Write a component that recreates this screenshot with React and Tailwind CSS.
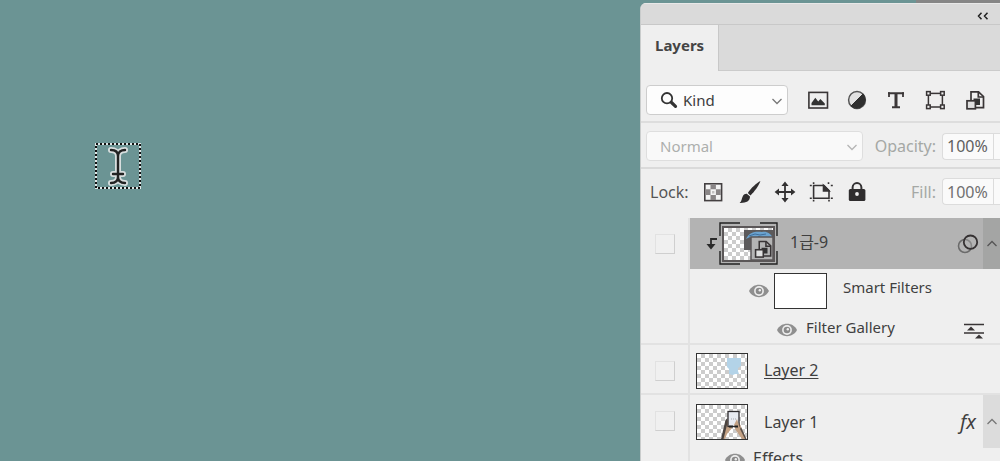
import { useState } from 'react'

const CHECKER = 'bg-[repeating-conic-gradient(#cccccc_0_25%,#ffffff_0_50%)] bg-size-[8px_8px]'

function Chevron({ className = '', up = false }) {
  return (
    <svg viewBox="0 0 12 8" className={`w-3 h-2 ${className}`} fill="none" stroke="currentColor" strokeWidth="1.3" aria-hidden="true">
      <path d={up ? 'M1.5 6 L6 1.5 L10.5 6' : 'M1.5 2 L6 6.5 L10.5 2'} />
    </svg>
  )
}

function SearchIcon({ className = '' }) {
  return (
    <svg viewBox="0 0 18 18" className={`w-[18px] h-[18px] ${className}`} fill="none" stroke="#333333" aria-hidden="true">
      <circle cx="7" cy="7.2" r="5.2" strokeWidth="1.8" />
      <path d="M11.5 11.5 L15.5 15.3" strokeWidth="3.2" strokeLinecap="round" />
    </svg>
  )
}

function Eye() {
  return (
    <svg viewBox="0 0 20 14" className="w-5 h-3.5" aria-hidden="true">
      <path d="M0 7 C4 -1.2 16 -1.2 20 7 C16 15.2 4 15.2 0 7Z" fill="#8f8f8f" />
      <circle cx="10" cy="7" r="4.9" fill="#ededed" />
      <circle cx="10" cy="7" r="3.3" fill="#8a8a8a" />
      <circle cx="10.8" cy="6.2" r="1.2" fill="#ededed" />
    </svg>
  )
}

// Filter row icons
function PixelIcon() {
  return (
    <svg viewBox="0 0 24 24" className="size-6">
      <rect x="2.9" y="4.4" width="18.6" height="15.6" fill="none" stroke="#393536" strokeWidth="1.6" />
      <path d="M5.5 17.2 V15 L9.3 9.8 L12.2 13.6 L14.4 11 L18.8 15.5 V17.2Z" fill="#333333" />
    </svg>
  )
}

function AdjustmentIcon() {
  return (
    <svg viewBox="0 0 24 24" className="size-6">
      <circle cx="12" cy="12" r="8.4" fill="#e2e2e2" stroke="#555555" strokeWidth="1.5" />
      <path d="M18 6 A8.5 8.5 0 0 1 6 18Z" fill="#2f2f2f" stroke="#2f2f2f" />
    </svg>
  )
}

function TypeIcon() {
  return (
    <svg viewBox="0 0 24 24" className="size-6" fill="none" stroke="#3b3738">
      <path d="M4 5.2 H20" strokeWidth="2" />
      <path d="M5 4.2 V9 M19 4.2 V9" strokeWidth="1.8" />
      <path d="M12 5 V19" strokeWidth="3" />
      <path d="M8 19.2 H16" strokeWidth="2" />
    </svg>
  )
}

function ShapeIcon() {
  return (
    <svg viewBox="0 0 24 24" className="size-6" fill="#efefef" stroke="#393536" strokeWidth="1.5">
      <rect x="5.4" y="5.4" width="14" height="13.6" fill="none" />
      <rect x="3.6" y="3.6" width="3.6" height="3.6" />
      <rect x="17.6" y="3.6" width="3.6" height="3.6" />
      <rect x="3.6" y="17" width="3.6" height="3.6" />
      <rect x="17.6" y="17" width="3.6" height="3.6" />
    </svg>
  )
}

function SmartObjectIcon({ className = 'size-6' }) {
  return (
    <svg viewBox="0 0 24 24" className={className} fill="none" stroke="#393536" strokeWidth="1.7">
      <path d="M9 12 V3.8 H16.5 L21.5 8.5 V19.6 H14" />
      <path d="M16.3 3.8 V9 H21.5" />
      <path d="M11.5 10.5 H18 V17 H14 V13 H11.5Z" fill="#333333" stroke="none" />
      <rect x="5" y="12.8" width="8.4" height="8" fill="#e0e0e0" />
    </svg>
  )
}

// Lock row icons
function TransparencyIcon() {
  return (
    <svg viewBox="0 0 24 24" className="size-6">
      <rect x="3.8" y="3.8" width="16.8" height="16.8" fill="#f4f4f4" stroke="#444041" strokeWidth="1.6" />
      <path
        d="M9.5 4.5h5.4v4.8h-5.4zM4.6 9.3h4.9v5.6h-4.9zM14.9 9.3h4.9v5.6h-4.9zM9.5 14.9h5.4v5h-5.4z"
        fill="#8a8687"
      />
      <path d="M11 11h2.4v2.4h-2.4z" fill="#c4c2c2" />
    </svg>
  )
}

function BrushIcon() {
  return (
    <svg viewBox="0 0 24 24" className="size-6" fill="#2f2d2e">
      <path d="M23.4 1 C20 2.5 13.5 8.5 10.8 13 L13.5 15.4 C17.5 11.5 22 5.5 23.4 1Z" />
      <path d="M9.8 13.8 L13 16.6 C13 21.5 9 23.2 2.6 23 C5 21 4.5 18.5 5.8 16.2 C6.8 14.4 8.4 13.6 9.8 13.8Z" />
    </svg>
  )
}

function MoveIcon() {
  return (
    <svg viewBox="0 0 24 24" className="size-6" fill="#333132">
      <path d="M11.1 4h1.8v16h-1.8zM4 11.1h16v1.8H4z" />
      <path d="M12 1.6 L15.6 6 H8.4ZM12 22.4 L8.4 18 H15.6ZM1.6 12 L6 8.4 V15.6ZM22.4 12 L18 15.6 V8.4Z" />
    </svg>
  )
}

function ArtboardIcon() {
  return (
    <svg viewBox="0 0 24 24" className="size-6" fill="none" stroke="#353233" strokeWidth="1.6">
      <path d="M4.6 5.5 H15 L20 10.5 V18.2 H4.6Z" />
      <path d="M14.5 5.5 V11 H20Z" fill="#353233" />
      <path d="M0.8 5.5 H2.8 M4.6 2.2 V4 M0.8 18.2 H2.8 M4.6 19.8 V21.6 M20 19.8 V21.6 M21.8 18.2 H23.8 M21.8 5.5 H23.8 M19.5 2.2 V4" />
    </svg>
  )
}

function LockIcon() {
  return (
    <svg viewBox="0 0 24 24" className="size-6">
      <path d="M7.6 10 V7.5 A4.4 4.4 0 0 1 16.4 7.5 V10" fill="none" stroke="#333132" strokeWidth="2" />
      <rect x="3.8" y="9" width="16.6" height="12" rx="1.5" fill="#2f2d2e" />
      <circle cx="12" cy="14" r="1.9" fill="#efefef" />
    </svg>
  )
}

const filters = [
  { label: 'Pixel layers', Icon: PixelIcon },
  { label: 'Adjustment layers', Icon: AdjustmentIcon },
  { label: 'Type layers', Icon: TypeIcon },
  { label: 'Shape layers', Icon: ShapeIcon },
  { label: 'Smart objects', Icon: SmartObjectIcon },
]

const locks = [
  { label: 'Lock transparent pixels', Icon: TransparencyIcon },
  { label: 'Lock image pixels', Icon: BrushIcon },
  { label: 'Lock position', Icon: MoveIcon },
  { label: 'Prevent auto-nesting', Icon: ArtboardIcon },
  { label: 'Lock all', Icon: LockIcon },
]

function VisibilityCell({ name }) {
  return (
    <div className="w-[49px] shrink-0 border-r-2 border-[#e2e2e2] pt-4 pl-3.5">
      <input
        type="checkbox"
        aria-label={`Show ${name}`}
        className="block size-5 appearance-none border border-[#e2e2e2] border-r-[#cfcfcf] border-b-[#cfcfcf] bg-[#f0f0f0]"
      />
    </div>
  )
}

function ValueField({ id, label, value, onChange, inputClass }) {
  return (
    <div className="ml-auto flex items-center text-base">
      <label htmlFor={id} className="mr-1.5 text-[#a5a8a5]">{label}</label>
      <div className="flex h-[27px] rounded-l border border-r-0 border-[#dcdcdc] bg-[#fafafa]">
        <input id={id} className={`w-[51px] border-r border-[#dcdcdc] pl-1 outline-none ${inputClass}`} value={value} onChange={e => onChange(e.target.value)} />
        <span className="w-1.5" />
      </div>
    </div>
  )
}

function SmartThumb() {
  return (
    <div className="relative h-[43px] w-[59px]">
      <svg viewBox="0 0 59 43" className="absolute inset-0" fill="none" stroke="#222222" strokeWidth="1.4">
        <path d="M21 1 H1 V14 M1 29 V42 H21 M41 1 H58 V14 M58 29 V42 H41" />
      </svg>
      <div className={`absolute top-1 left-[3px] h-[36px] w-[53px] border-2 border-[#5b5758] ${CHECKER}`}>
        <svg viewBox="0 0 49 32" className="h-8 w-[49px]">
          <rect x="20" y="2" width="29" height="20" fill="#5c5a5b" />
          <path d="M22 11 C25 4 32 3 38 4 C43 3 47 6 49 10 L44 9 L40 11 L35 8 L30 11 L26 9Z" fill="#6ba3cf" />
          <path d="M25 8 L31 6 L36 7 L42 6" stroke="#3f6f9c" fill="none" />
          <rect x="27" y="9" width="22" height="23" fill="#b4b4b4" stroke="#5b5758" strokeWidth="1.5" />
        </svg>
        <SmartObjectIcon className="absolute right-0 bottom-0 size-[22px]" />
      </div>
    </div>
  )
}

function LayerTwoThumb() {
  return (
    <div className={`h-[36px] w-[52px] border border-[#333333] ${CHECKER}`}>
      <svg viewBox="0 0 50 34" className="h-[34px] w-[50px]">
        <path d="M30 4 H44 V12 L41 14 V17 L42 20 L38 20 L36 21 L32 20 V15 L30 13Z" fill="#b3d3e8" />
      </svg>
    </div>
  )
}

function LayerOneThumb() {
  return (
    <div className={`h-[36px] w-[52px] border border-[#333333] ${CHECKER}`}>
      <svg viewBox="0 0 50 34" className="h-[34px] w-[50px]">
        <path d="M25 34 L28 22 L31 14 L35 23 L30 29 L28 34Z" fill="#c3a184" />
        <path d="M24 34 L28.5 15 L30.5 13 L30 20 L26.5 34Z" fill="#4a4340" />
        <path d="M39 19 L41 14 L44 22 L49 34 H45 L38 24Z" fill="#c3a184" />
        <path d="M44 22 L49.5 34 H48 L43 24Z" fill="#5b504a" />
        <rect x="31" y="6.5" width="11" height="15" fill="#e8ebf2" stroke="#2e2c2f" strokeWidth="1.3" />
        <path d="M37 20 L40 14 L42.5 22 L40 24Z" fill="#c3a184" />
        <path d="M32 21.5 H36 M37.5 21.5 H41" stroke="#222222" strokeWidth="2" />
        <path d="M34 14 H39" stroke="#a5a9b0" strokeDasharray="1 1" />
      </svg>
    </div>
  )
}

function LayersPanel() {
  const [kind, setKind] = useState('Kind')
  const [mode, setMode] = useState('Normal')
  const [opacity, setOpacity] = useState('100%')
  const [fill, setFill] = useState('100%')

  return (
    <section className="flex min-h-0 flex-1 flex-col overflow-hidden rounded-tl-md border-l border-[#c9cccc] bg-[#efefef]">
      <div className="flex h-[22px] shrink-0 items-center justify-end border-t border-b border-[#c8c8c8] border-t-[#e8e8e8] bg-[#dadada] pt-1 pr-2.5">
        <button aria-label="Collapse panel">
          <svg viewBox="0 0 14 8" className="h-2 w-3.5" fill="none" stroke="#222222" strokeWidth="1.5">
            <path d="M5.5 0.8 L2.5 4 L5.5 7.2 M11.5 0.8 L8.5 4 L11.5 7.2" />
          </svg>
        </button>
      </div>
      <div className="flex h-[46px] shrink-0 bg-[#dadada]">
        <button className="border-r border-[#c8c8c8] bg-[#efefef] px-3.5 pb-1.5 text-[15px] font-bold text-[#444444]">Layers</button>
        <div className="flex-1 border-b border-[#cbcbcb]" />
      </div>

      <div className="flex h-[52px] shrink-0 items-center border-b-2 border-[#dddddd] pt-2 pl-[5px]">
        <div className="relative">
          <SearchIcon className="absolute top-1.5 left-3.5" />
          <select
            aria-label="Filter type"
            className="h-[30px] w-[142px] appearance-none rounded border border-[#cdcdcd] bg-[#fdfdfd] pl-9 text-[#3c3c3c]"
            value={kind}
            onChange={e => setKind(e.target.value)}
          >
            <option>Kind</option>
            <option>Name</option>
            <option>Effect</option>
          </select>
          <Chevron className="pointer-events-none absolute top-3 right-[5px] text-[#777777]" />
        </div>
        <div className="ml-[18px] flex gap-[15px]">
          {filters.map(({ label, Icon }) => (
            <button key={label} aria-label={label}><Icon /></button>
          ))}
        </div>
      </div>

      <div className="flex h-[46px] shrink-0 items-center border-b-2 border-[#dadada] pt-0.5 pl-[5px]">
        <div className="relative">
          <select
            aria-label="Blend mode"
            className="h-[30px] w-[217px] appearance-none rounded border border-[#dedede] bg-[#f9f9f9] pl-[13px] text-[#adafad]"
            value={mode}
            onChange={e => setMode(e.target.value)}
          >
            <option>Normal</option>
            <option>Multiply</option>
            <option>Screen</option>
          </select>
          <Chevron className="pointer-events-none absolute top-3 right-[5px] text-[#b5b5b5]" />
        </div>
        <ValueField id="opacity" label="Opacity:" value={opacity} onChange={setOpacity} inputClass="text-[#606060]" />
      </div>

      <div className="flex h-[49px] shrink-0 items-center pb-1 pl-[9px]">
        <span className="w-[51px] text-base text-[#555555]">Lock:</span>
        <div className="flex gap-3">
          {locks.map(({ label, Icon }) => (
            <button key={label} aria-label={label}><Icon /></button>
          ))}
        </div>
        <ValueField id="fill" label="Fill:" value={fill} onChange={setFill} inputClass="text-[#707070]" />
      </div>

      <ul className="min-h-0 flex-1 overflow-hidden text-[#3f3f3f]">
        <li className="flex border-b-2 border-[#e2e2e2]">
          <VisibilityCell name="1급-9" />
          <div className="flex-1">
            <div className="flex h-[51px] items-center bg-[#b3b3b3]">
              <svg viewBox="0 0 12 14" className="ml-4 h-3.5 w-3" fill="none" stroke="#2a2a2a" strokeWidth="1.8" aria-hidden="true">
                <path d="M11 2 H5 V8" />
                <path d="M0.5 7 H9.5 L5 12.5Z" fill="#2a2a2a" stroke="none" />
              </svg>
              <div className="ml-px"><SmartThumb /></div>
              <span className="ml-3 pb-1 text-base leading-5">1급-9</span>
              <svg viewBox="0 0 22 20" className="mr-1 ml-auto h-5 w-[22px]" fill="none" aria-hidden="true">
                <circle cx="8" cy="12" r="6.5" stroke="#6b6b6b" strokeWidth="1.6" />
                <circle cx="13.5" cy="8.2" r="6.7" fill="#b3b3b3" fillOpacity="0.4" stroke="#353132" strokeWidth="1.8" />
              </svg>
              <button aria-label="Collapse smart filters" className="flex h-full w-[17px] items-center justify-center bg-[#a4a5a4] text-[#555555]"><Chevron up /></button>
            </div>
            <div className="flex h-[44px] items-center pl-[59px]">
              <button aria-label="Toggle smart filters"><Eye /></button>
              <div className="ml-[5px] h-[36px] w-[53px] border border-[#333333] bg-white" />
              <span className="ml-4 pb-2">Smart Filters</span>
            </div>
            <div className="flex h-[30px] items-center pl-[87px]">
              <button aria-label="Toggle Filter Gallery" className="pt-1"><Eye /></button>
              <span className="ml-[9px] pb-0.5">Filter Gallery</span>
              <button aria-label="Filter blending options" className="mr-4 ml-auto pt-1.5">
                <svg viewBox="0 0 20 16" className="h-4 w-5" fill="#393536" stroke="#393536">
                  <path d="M0 1.5 H20 M0 10 H20" strokeWidth="1.7" />
                  <path d="M7 3.5 L11 7.5 H3ZM15 11.5 L19 15.5 H11Z" stroke="none" />
                </svg>
              </button>
            </div>
          </div>
        </li>

        <li className="flex h-[50px] border-b-2 border-[#e2e2e2]">
          <VisibilityCell name="Layer 2" />
          <div className="flex flex-1 items-center pt-1 pl-1.5">
            <LayerTwoThumb />
            <span className="ml-4 pb-0.5 text-base leading-5 underline decoration-1 underline-offset-2 [text-decoration-skip-ink:none]">Layer 2</span>
          </div>
        </li>

        <li className="flex">
          <VisibilityCell name="Layer 1" />
          <div className="flex-1">
            <div className="flex h-[53px] items-center pl-1.5">
              <LayerOneThumb />
              <span className="ml-4 text-base leading-5">Layer 1</span>
              <span className="mr-[7px] ml-auto text-xl italic">fx</span>
              <button aria-label="Collapse effects" className="flex h-full w-[17px] items-center justify-center bg-[#dcdcdc] text-[#777777]"><Chevron up /></button>
            </div>
            <div className="flex items-center pl-[35px]">
              <button aria-label="Toggle effects" className="pt-1"><Eye /></button>
              <span className="ml-2 text-base leading-5">Effects</span>
            </div>
          </div>
        </li>
      </ul>
    </section>
  )
}

export default function App() {
  return (
    <div className="flex h-screen overflow-hidden bg-[#6b9494] font-['Noto_Sans','Noto_Sans_CJK_KR',sans-serif] text-[15px] leading-5">
      <main className="relative flex-1">
        {/* Text cursor inside its marquee */}
        <svg viewBox="0 0 48 48" className="absolute top-[142px] left-[94px] size-12" fill="none">
          <rect x="2" y="2" width="44" height="44" stroke="#e0e8e8" strokeWidth="2" />
          <rect x="2" y="2" width="44" height="44" stroke="#111111" strokeWidth="2" strokeDasharray="2 2" />
          <g strokeLinecap="round">
            <path d="M17 8 C21 8 24 10 24 14 C24 10 27 8 31 8 M24 14 V36 M19 32 H29 M17 41 C21 41 24 39 24 35 C24 39 27 41 31 41" stroke="#d8dede" strokeWidth="6" />
            <path d="M17 8 C21 8 24 10 24 14 C24 10 27 8 31 8 M24 14 V36 M19 32 H29 M17 41 C21 41 24 39 24 35 C24 39 27 41 31 41" stroke="#222222" strokeWidth="2.4" />
          </g>
        </svg>
      </main>
      <aside className="flex w-[360px] shrink-0 flex-col">
        <div className="flex h-[3px] shrink-0 justify-end">
          <div className="w-[84px] bg-[#868686]" />
        </div>
        <LayersPanel />
      </aside>
    </div>
  )
}
